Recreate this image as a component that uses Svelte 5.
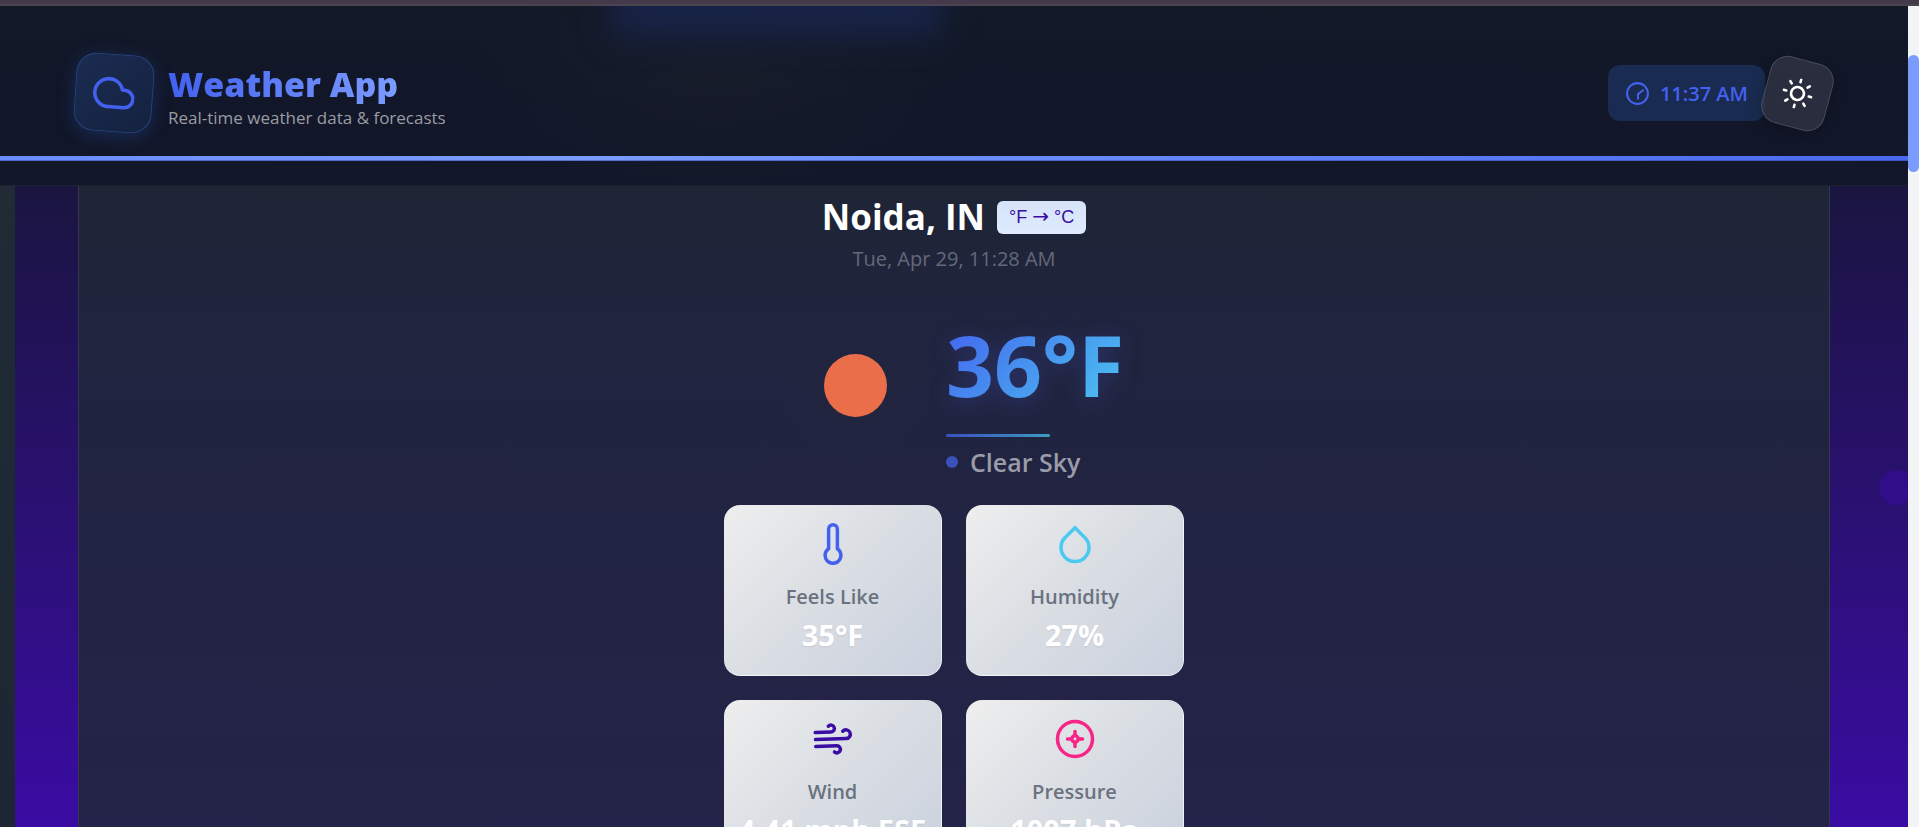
<script>
  let time = '11:37 AM';
  const stats = [
    { icon: 'thermo', label: 'Feels Like', value: '35°F' },
    { icon: 'drop', label: 'Humidity', value: '27%' },
    { icon: 'wind', label: 'Wind', value: '4.41 mph ESE' },
    { icon: 'pressure', label: 'Pressure', value: '1007 hPa' }
  ];
</script>

<div class="app">
  <div class="strip"></div>
  <div class="viewport">
    <div class="page">
      <header>
        <span class="glow"></span>
        <div class="bar">
          <div class="brand">
            <div class="logo">
              <svg viewBox="0 0 24 24"><path d="M18 10h-1.26A8 8 0 1 0 9 20h9a5 5 0 0 0 0-10z" /></svg>
            </div>
            <div class="names">
              <h1>Weather App</h1>
              <p>Real-time weather data &amp; forecasts</p>
            </div>
          </div>
          <div class="tools">
            <div class="clock">
              <svg viewBox="0 0 24 24">
                <circle cx="12" cy="12" r="10" />
                <path d="M12.5 17v-4.500l5-3.600" />
              </svg>
              <span>{time}</span>
            </div>
            <button class="theme" aria-label="Toggle theme">
              <svg viewBox="0 0 24 24">
                <circle cx="12" cy="12" r="5" />
                <path d="M12 1v2M12 21v2M4.220 4.220l1.420 1.420M18.360 18.360l1.420 1.420M1 12h2M21 12h2M4.220 19.780l1.420-1.420M18.360 5.640l1.420-1.420" />
              </svg>
            </button>
          </div>
        </div>
        <div class="accent"></div>
        <div class="under"></div>
      </header>

      <div class="stage">
        <span class="bubble"></span>
        <main>
          <div class="place">
            <h2>Noida, IN</h2>
            <button class="unit">°F <span>→</span> °C</button>
          </div>
          <p class="date">Tue, Apr 29, 11:28 AM</p>

          <section class="now">
            <div class="disc"><span></span></div>
            <div class="reading">
              <div class="temp">36°F</div>
              <div class="rule"></div>
              <div class="sky"><i></i><span>Clear Sky</span></div>
            </div>
          </section>

          <section class="cards">
            {#each stats as s}
              <article>
                <svg class={s.icon} viewBox="0 0 24 24">
                  {#if s.icon === 'thermo'}
                    <path d="M14.500 14.760V3.500a2.500 2.500 0 0 0-5 0v11.260a4.500 4.500 0 1 0 5 0z" />
                  {:else if s.icon === 'drop'}
                    <path d="M12 2.690l5.660 5.660a8 8 0 1 1-11.310 0z" />
                  {:else if s.icon === 'wind'}
                    <path d="M9.590 4.590A2 2 0 1 1 11 8H2m10.590 11.410A2 2 0 1 0 14 16H2m15.730-8.270A2.500 2.500 0 1 1 19.500 12H2" />
                  {:else}
                    <circle cx="12" cy="12" r="10" />
                    <circle cx="12" cy="12" r="1.800" />
                    <path d="M12 7.700v2M12 14.300v2M7.700 12h2M14.300 12h2" />
                  {/if}
                </svg>
                <h3>{s.label}</h3>
                <strong>{s.value}</strong>
              </article>
            {/each}
          </section>
        </main>
      </div>
    </div>
    <div class="track"><div class="thumb"></div></div>
  </div>
</div>

<style>
  :global(body) { margin: 0; background: #121829; }
  * { box-sizing: border-box; }
  h1, h2, h3, p { margin: 0; }
  button { font: inherit; padding: 0; cursor: pointer; }
  svg { fill: none; stroke: currentColor; stroke-width: 2; stroke-linecap: round; stroke-linejoin: round; display: block; }

  .app {
    height: 100vh;
    overflow: hidden;
    display: flex;
    flex-direction: column;
    font-family: "Open Sans", "Noto Sans", sans-serif;
    color: #fff;
  }
  .strip { flex: none; height: 6px; background: #453a4c; border-bottom: 2px solid #4a444e; }
  .viewport { flex: 1; min-height: 0; display: flex; }
  .page { flex: 1; min-width: 0; display: flex; flex-direction: column; overflow: hidden; }

  header {
    position: relative;
    overflow: hidden;
    flex: none;
    background:
      radial-gradient(ellipse 260px 110px at 720px 70px, rgba(32, 36, 46, .4), transparent),
      linear-gradient(#121927, #111629 60%, #121829);
    border-bottom: 1px solid #1c2231;
  }
  .glow {
    position: absolute;
    left: 612px;
    top: -60px;
    width: 330px;
    height: 90px;
    background: #182348;
    filter: blur(16px);
  }
  .bar {
    position: relative;
    display: flex;
    justify-content: space-between;
    align-items: center;
    height: 150px;
    padding: 24px 78px 0 75px;
  }
  .brand { display: flex; align-items: center; gap: 15px; }
  .logo {
    width: 78px;
    height: 78px;
    display: grid;
    place-items: center;
    border-radius: 20px;
    border: 1px solid #25427f;
    background: linear-gradient(135deg, #1b2c52, #14223f);
    box-shadow: 0 4px 18px rgba(40, 84, 170, .35);
    color: #4361ee;
    transform: rotate(4deg);
  }
  .logo svg { width: 42px; }
  .names { padding-top: 10px; }
  h1 {
    width: max-content;
    font-size: 34px;
    line-height: 40px;
    font-weight: 800;
    background: linear-gradient(90deg, #4361ee, #7b9cff);
    background-clip: text;
    color: transparent;
  }
  .names p { font-size: 17px; line-height: 28px; color: #9a9ca3; }

  .tools { display: flex; align-items: center; }
  .clock {
    display: flex;
    align-items: center;
    gap: 10px;
    height: 56px;
    padding: 0 17px;
    border-radius: 12px;
    background: #192b50;
    color: #4361ee;
    font-size: 20px;
    font-weight: 600;
  }
  .clock svg { width: 25px; }
  .theme {
    width: 65px;
    height: 69px;
    display: grid;
    place-items: center;
    border-radius: 18px;
    border: 1px solid rgba(255, 255, 255, .14);
    background: rgba(51, 54, 68, .75);
    color: #fff;
    box-shadow: 0 4px 15px rgba(0, 0, 0, .2);
    transform: rotate(15deg);
  }
  .theme svg { width: 31px; }
  .accent {
    position: relative;
    height: 5px;
    border-bottom: 1px solid rgba(50, 70, 150, .5);
    background: linear-gradient(90deg, #6b8cff, #7b9cff 30%, #6488fa 60%, #4a68ee);
  }
  .under { height: 24px; }

  .stage {
    position: relative;
    flex: 1;
    min-height: 0;
    padding: 0 78px;
    background:
      linear-gradient(#202b36, #1d2734) 0 0 / 15px 100% no-repeat,
      linear-gradient(#1a1540, #3a0ca3);
    overflow: hidden;
  }
  .bubble {
    position: absolute;
    right: -6px;
    top: 284px;
    width: 35px;
    height: 35px;
    border-radius: 50%;
    background: rgba(58, 12, 163, .5);
  }
  main {
    min-height: 100%;
    display: flex;
    flex-direction: column;
    align-items: center;
    padding-top: 7px;
    border: solid #34384e;
    border-width: 0 1px;
    background: linear-gradient(#1e2535, #20243e 20%, #24234a);
  }
  .place { display: flex; align-items: center; gap: 12px; }
  h2 { font-size: 35px; line-height: 48px; font-weight: 700; }
  .unit {
    height: 33px;
    padding: 0 12px;
    border: 0;
    border-radius: 6px;
    background: linear-gradient(#d5e3f8, #dfeaff);
    color: #3a0ca3;
    font-family: "Liberation Sans", Arial, sans-serif;
    font-size: 18px;
  }
  .unit span { font-family: "DejaVu Sans", sans-serif; font-size: 20px; line-height: 20px; }
  .date { font-size: 20px; line-height: 36px; color: #646979; }

  .now { display: flex; align-items: flex-start; gap: 12px; margin-top: 38px; padding-right: 6px; }
  .disc {
    width: 156px;
    height: 156px;
    display: grid;
    place-items: center;
    margin-top: -8px;
    border-radius: 50%;
    background: radial-gradient(circle, #20253f, transparent 70%);
  }
  .disc span { width: 63px; height: 63px; border-radius: 50%; background: #eb6e4b; }
  .temp {
    width: max-content;
    font-size: 84px;
    line-height: 100px;
    font-weight: 700;
    background: linear-gradient(135deg, #4361ee, #4cc9f0);
    background-clip: text;
    color: transparent;
    filter: drop-shadow(0 4px 10px rgba(67, 97, 238, .25));
  }
  .rule {
    width: 104px;
    height: 3px;
    margin-top: 19px;
    border-radius: 2px;
    background: linear-gradient(90deg, #3a50c0, #3c9cc0);
  }
  .sky {
    display: flex;
    align-items: center;
    gap: 12px;
    margin-top: 7px;
    font-size: 25px;
    line-height: 36px;
    font-weight: 600;
    color: #9a9caa;
  }
  .sky i { width: 12px; height: 12px; border-radius: 50%; background: #3c50bb; }

  .cards { display: grid; grid-template-columns: 218px 218px; gap: 24px; margin-top: 25px; }
  article {
    display: flex;
    flex-direction: column;
    align-items: center;
    height: 171px;
    padding-top: 18px;
    border-radius: 16px;
    border: solid rgba(255, 255, 255, .5);
    border-width: 0 1px 1px 0;
    background: linear-gradient(135deg, #eeeeee, #dbdfe4 45%, #cad1de);
    white-space: nowrap;
  }
  article svg { width: 42px; height: 42px; }
  .thermo { color: #4361ee; }
  .drop { color: #4cc9f0; }
  .wind { color: #3a0ca3; transform: rotate(-2deg); }
  .pressure { color: #f72585; }
  h3 { margin-top: 18px; font-size: 20px; line-height: 28px; font-weight: 600; color: #6b7280; }
  strong {
    margin-top: 4px;
    font-size: 29px;
    line-height: 40px;
    font-weight: 700;
    color: #fff;
    text-shadow: 0 1px 2px rgba(0, 0, 0, .08);
  }

  .track { flex: none; width: 11px; padding-top: 49px; background: #f3f4f6; }
  .thumb { height: 117px; border-radius: 6px; background: #7b9cff; }
</style>
